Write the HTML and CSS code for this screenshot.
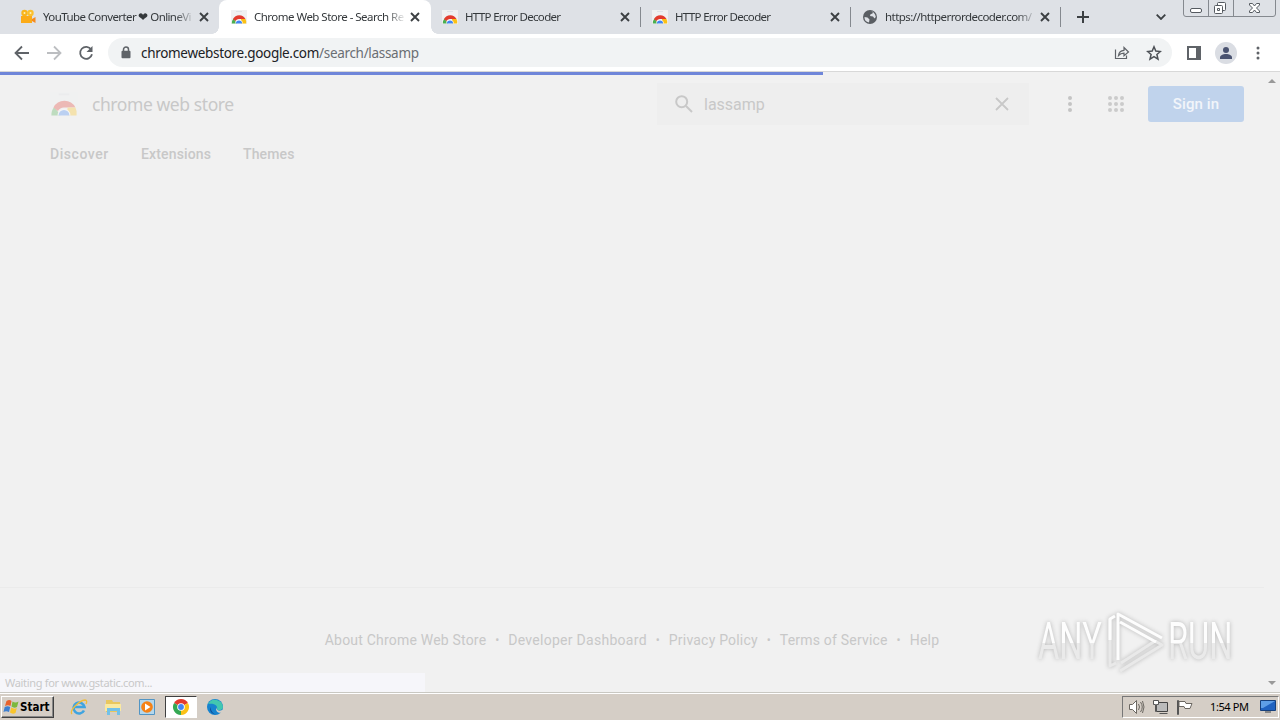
FILE: index.html
```html
<!DOCTYPE html>
<html lang="en">

<head>
  <meta charset="UTF-8">
  <meta name="viewport" content="width=device-width, initial-scale=1.0">
  <title>Chrome Web Store</title>
  <link rel="stylesheet" href="styles.css">
</head>

<body>
  <!-- shared icons -->
  <svg class="defs" width="0" height="0">
    <symbol id="store" viewBox="0 0 16 16">
      <path fill="#f0f1f2" d="M0 1h16v14H0z" />
      <path fill="#dfe2e6" d="M5 2h6v1H5z" />
      <path fill="#4caf50" d="M.8 14.500a7.200 7.200 0 0 1 1.700-5L6 14.500z" />
      <path fill="#e33b2e" d="M2 10a7 7 0 0 1 12.500 0H8a4 4 0 0 0-3.500 2z" />
      <path fill="#fbc116" d="M10 10h4.500a7 7 0 0 1 .7 4.500H10z" />
      <path fill="#fff" d="M4.300 14.500a3.700 3.700 0 0 1 7.400 0z" />
      <path fill="#4285f4" d="M4.900 14.500a3.100 3.100 0 0 1 6.200 0z" />
    </symbol>
    <symbol id="cross" viewBox="0 0 10 10">
      <path d="M1 1l8 8M9 1l-8 8" fill="none" stroke="currentColor" stroke-width="1.900" />
    </symbol>
  </svg>

  <div class="screen">
    <div class="tabstrip">
      <div class="tab tab-first">
        <svg class="favicon" viewBox="0 0 16 16">
          <circle cx="4.500" cy="4" r="3.200" fill="#f9b51c" />
          <circle cx="10.500" cy="4" r="3.200" fill="#fbc02d" />
          <circle cx="4.500" cy="4" r="1" fill="#fff0b8" />
          <circle cx="10.500" cy="4" r="1" fill="#fff0b8" />
          <path fill="#fbab18" d="M1 7h11v7H1z" />
          <path fill="#f58a1f" d="M12 10l3.500-2v6L12 12z" />
        </svg>
        <span class="tab-title t1">YouTube Converter ❤ OnlineVi</span>
        <svg class="tab-close"><use href="#cross" /></svg>
      </div>
      <div class="tab tab-active">
        <svg class="favicon"><use href="#store" /></svg>
        <span class="tab-title t2">Chrome Web Store - Search Re</span>
        <svg class="tab-close"><use href="#cross" /></svg>
      </div>
      <div class="tab tab-plain">
        <svg class="favicon"><use href="#store" /></svg>
        <span class="tab-title t3">HTTP Error Decoder</span>
        <svg class="tab-close"><use href="#cross" /></svg>
      </div>
      <div class="tab tab-plain">
        <svg class="favicon"><use href="#store" /></svg>
        <span class="tab-title t3">HTTP Error Decoder</span>
        <svg class="tab-close"><use href="#cross" /></svg>
      </div>
      <div class="tab tab-plain">
        <svg class="favicon" viewBox="0 0 16 16">
          <circle cx="8" cy="8" r="7" fill="#5a5e63" />
          <path fill="#dee1e6" d="M2.500 8l3 .5 2 2-.5 3C4 13 2.300 11 2.500 8zM8 2l3 .6-.5 1.900-2 .8L8 7l3 .5 1.500 2 1.300-1.500C13.500 5 11 2 8 2z" />
        </svg>
        <span class="tab-title t4">https://httperrordecoder.com/</span>
        <svg class="tab-close"><use href="#cross" /></svg>
      </div>
      <svg class="new-tab" viewBox="0 0 12 12">
        <path d="M6 0v12M0 6h12" stroke="#3c4043" stroke-width="2" />
      </svg>
      <svg class="tab-search" viewBox="0 0 10 6">
        <path d="M.7.7L5 5 9.300.7" fill="none" stroke="#3c4043" stroke-width="1.800" />
      </svg>
      <svg class="window-buttons" viewBox="0 0 94 18">
        <path d="M.5 0v14q0 2.500 2.500 2.500h87q2.500 0 2.500-2.500V0M25.500 0v16M50.500 0v16" fill="none" stroke="#85898f" />
        <rect x="7.500" y="8.500" width="11" height="4" rx="1.500" fill="#fff" stroke="#555a60" />
        <g fill="#fff" stroke="#555a60">
          <rect x="34.500" y="2.500" width="8" height="8" rx="1" />
          <rect x="31.500" y="5.500" width="8" height="8" rx="1" />
          <path d="M34.500 8.500h2v2h-2z" />
          <path d="M66.500 3.500h3l2 2.500 2-2.500h3v1.500L73.500 8l3 3v1.500h-3l-2-2.500-2 2.500h-3V11l3-3-3-3z" />
        </g>
      </svg>
    </div>

    <div class="toolbar">
      <svg class="nav-icon back" viewBox="0 0 16 16">
        <path d="M15 8H2M8 1.500L1.500 8 8 14.500" />
      </svg>
      <svg class="nav-icon forward" viewBox="0 0 16 16">
        <path d="M1 8h13M8 1.500L14.500 8 8 14.500" />
      </svg>
      <svg class="nav-icon reload" viewBox="0 0 16 16">
        <path d="M13.200 4.500A6 6 0 1 0 14 9.300" />
        <path d="M14.500 1v6h-6z" class="solid" />
      </svg>
      <div class="omnibox">
        <svg class="lock" viewBox="0 0 10 13">
          <path d="M2.500 6V3.500a2.500 2.500 0 0 1 5 0V6" fill="none" stroke="#5f6368" stroke-width="1.500" />
          <rect x="0.500" y="4.800" width="9" height="7.500" rx="1" fill="#5f6368" />
        </svg>
        <span class="url"><b>chromewebstore.google.com</b>/search/lassamp</span>
        <svg class="share" viewBox="0 0 16 16">
          <path d="M1.500 4.500v9h11v-3M4.500 10.500C5 7 7 5.500 10 5.300V2.500L14.500 7 10 10.800V8.200C7.500 8.200 6 8.800 4.500 10.500z" fill="none" stroke="#5f6368" stroke-width="1.200" />
        </svg>
        <svg class="star" viewBox="0 0 16 16">
          <path d="M8 1.800l1.800 4.300 4.600.4-3.500 3 1.100 4.600L8 11.700l-4 2.400 1.100-4.600-3.500-3 4.600-.4z" fill="none" stroke="#4d5156" stroke-width="1.500" />
        </svg>
      </div>
      <svg class="side-panel" viewBox="0 0 14 14">
        <path d="M1 1h12v12H1z" fill="none" stroke="#5f6368" stroke-width="2" />
        <path d="M9 1h4v12H9z" fill="#5f6368" />
      </svg>
      <svg class="avatar" viewBox="0 0 22 22">
        <circle cx="11" cy="11" r="11" fill="#dadde3" />
        <circle cx="11" cy="8" r="3" fill="#4a5370" />
        <path d="M5 17v-1.500c0-2 3-3.500 6-3.500s6 1.500 6 3.500V17z" fill="#4a5370" />
      </svg>
      <svg class="kebab" viewBox="0 0 4 14">
        <circle cx="2" cy="2" r="1.500" />
        <circle cx="2" cy="7" r="1.500" />
        <circle cx="2" cy="12" r="1.500" />
      </svg>
    </div>

    <main class="page">
      <div class="progress"></div>
      <header class="store-header">
        <svg class="logo"><use href="#store" /></svg>
        <span class="brand">chrome web store</span>
        <div class="search">
          <svg class="search-icon" viewBox="0 0 18 18">
            <circle cx="6.700" cy="6.700" r="5.500" />
            <path d="M11 11l6 6" />
          </svg>
          <span class="query">lassamp</span>
          <svg class="clear" viewBox="0 0 14 14">
            <path d="M1 1l12 12M13 1L1 13" />
          </svg>
        </div>
        <svg class="more" viewBox="0 0 4 16">
          <circle cx="2" cy="2" r="2" />
          <circle cx="2" cy="8" r="2" />
          <circle cx="2" cy="14" r="2" />
        </svg>
        <svg class="apps" viewBox="0 0 16 16">
          <path d="M2 2h0M8 2h0M14 2h0M2 8h0M8 8h0M14 8h0M2 14h0M8 14h0M14 14h0" />
        </svg>
        <div class="sign-in"><span>Sign in</span></div>
      </header>
      <nav class="store-nav">
        <span class="n1">Discover</span>
        <span class="n2">Extensions</span>
        <span class="n3">Themes</span>
      </nav>
      <footer class="store-footer">
        <span class="f1">About Chrome Web Store</span><i>•</i>
        <span class="f2">Developer Dashboard</span><i>•</i>
        <span class="f3">Privacy Policy</span><i>•</i>
        <span class="f4">Terms of Service</span><i>•</i>
        <span class="f5">Help</span>
      </footer>
      <div class="status"><span>Waiting for www.gstatic.com...</span></div>
      <i class="scroll-up"></i>
      <i class="scroll-down"></i>
      <div class="watermark">
        <span class="word">ANY</span>
        <svg class="play" viewBox="0 0 60 64">
          <path class="lower" d="M4 9v47l6-3M14 61l42-26-7-4" />
          <path class="lower" d="M15 53l34-22" />
          <path d="M4 30V9l5-3M12 50V4l44 24M14 12l36 20" />
        </svg>
        <span class="word">RUN</span>
      </div>
    </main>

    <div class="taskbar">
      <div class="start">
        <svg class="flag" viewBox="0 0 16 16">
          <path fill="#e8622c" d="M3 2q3-2 5 0L7 7Q4.500 5.500 1.500 7z" />
          <path fill="#7cb83c" d="M9 2.500q3 2 6 0L13.500 8q-3 1.500-5.500-.5z" />
          <path fill="#3d7fd0" d="M1.200 8q3-1.500 5.500 0L5.500 13q-3-1.500-5.500 0z" />
          <path fill="#f9c52c" d="M7.700 8.500q3 2 5.600.5L12 14q-3 1.500-5.500-.5z" />
        </svg>
        <span>Start</span>
      </div>
      <div class="task">
        <svg viewBox="0 0 18 18">
          <path d="M14 12.500a5.500 5.500 0 1 1 .5-3.500H5" fill="none" stroke="#3fa4e0" stroke-width="2.600" />
          <path d="M2 16C-1 13 9 2.500 15 2c2 0 2 2 1 4" fill="none" stroke="#f0bd3a" stroke-width="1.300" />
        </svg>
      </div>
      <div class="task">
        <svg viewBox="0 0 18 18">
          <path fill="#e9c75e" d="M2 2h6l1 2h7v10H2z" />
          <path fill="#fae9a0" d="M1 6h16v7H1z" />
          <path fill="#73c1e8" d="M3 10h13v7h-3v-4H6v4H3z" />
        </svg>
      </div>
      <div class="task">
        <svg viewBox="0 0 18 18">
          <path fill="#b4d7ec" stroke="#5295c4" d="M1.500 1.500h15v15h-15z" />
          <circle cx="9" cy="9" r="5.800" fill="#f58216" />
          <path fill="#fff" d="M7 5.500l5.500 3.500L7 12.500z" />
        </svg>
      </div>
      <div class="task task-active">
        <svg viewBox="0 0 18 18">
          <path fill="#e33b2e" d="M9 9L2.070 5a8 8 0 0 1 13.860 0z" />
          <path fill="#fbc116" d="M9 9l6.930-4A8 8 0 0 1 9 17z" />
          <path fill="#34a853" d="M9 9v8A8 8 0 0 1 2.070 5z" />
          <circle cx="9" cy="9" r="3.800" fill="#fff" />
          <circle cx="9" cy="9" r="2.900" fill="#4285f4" />
        </svg>
      </div>
      <div class="task">
        <svg viewBox="0 0 18 18">
          <circle cx="9" cy="9" r="8" fill="#1683cf" />
          <path fill="#42c7b0" d="M2 6a8 8 0 0 1 15 3c0 3-4 4-6 2.500C12 8 9 5 2 6z" />
          <path fill="#104a94" d="M5 9c-1 4 3 8 7 7.500C7 17 2 13 5 9z" />
          <path fill="#d6cfc6" d="M10.500 9.500c-.5 3 3 4 6.800 2.300l.7 2-3 1c-3 .5-6-2-4.500-5.300z" />
        </svg>
      </div>
      <div class="tray">
        <svg class="tray-icons" viewBox="0 0 66 18">
          <g fill="#fff" stroke="#6b6761">
            <path d="M1.500 6.500h3l4-4v13l-4-4h-3z" />
            <path fill="none" d="M10.500 6q2 3 0 6M12.500 4q3.500 5 0 10M14.500 3q3 6 0 12" />
            <path fill="#bbb" stroke="#444" d="M28.500 4.500h11v9h-11z" />
            <path stroke="#555" d="M25.500 2.500h5v4h-2v7h-1v-7h-2zM31.500 15.500h8" />
            <path d="M49.500 2.500v14h1v-14z" stroke="#555" />
            <path d="M51 3.500h6l1 2h6l-2 5h-5l-1-2h-5z" />
          </g>
        </svg>
        <span class="clock">1:54 PM</span>
        <svg class="monitor" viewBox="0 0 16 14">
          <path fill="#2062c0" stroke="#16407c" d="M.5.500h15v10H.5z" />
          <path fill="#5e9ee6" d="M1 1h14L3 8H1z" />
          <path fill="#888" d="M5 11h6v2H5z" />
        </svg>
      </div>
    </div>
  </div>
</body>

</html>
```
FILE: styles.css
```css
* {
  box-sizing: border-box;
}

body {
  margin: 0;
}

svg {
  display: block;
  flex: none;
}

.defs {
  position: absolute;
}

.screen {
  width: 1280px;
  height: 720px;
  display: flex;
  flex-direction: column;
  overflow: hidden;
  font-family: "Noto Sans", sans-serif;
  background: #f1f1f1;
}

.tabstrip {
  height: 34px;
  display: flex;
  align-items: center;
  background: #dee1e6;
}

.tab {
  width: 210px;
  height: 34px;
  display: flex;
  align-items: center;
  padding-left: 12px;
}

.tab-first {
  width: 219px;
  padding-left: 20px;
}

.tab-active {
  position: relative;
  width: 212px;
  background: #fff;
  border-radius: 8px 8px 0 0;
}

/* flared feet of the active tab */
.tab-active::before,
.tab-active::after {
  content: "";
  position: absolute;
  bottom: 0;
  width: 7px;
  height: 7px;
}

.tab-active::before {
  left: -7px;
  background: radial-gradient(circle at 0 0, transparent 6.5px, #fff 7px);
}

.tab-active::after {
  right: -7px;
  background: radial-gradient(circle at 100% 0, transparent 6.5px, #fff 7px);
}

.tab-plain {
  height: 20px;
  border-right: 1px solid #85898f;
  padding-left: 11px;
}

.favicon {
  width: 16px;
  height: 16px;
  margin-right: 7px;
}

.tab-title {
  width: 150px;
  margin-right: 6px;
  white-space: nowrap;
  font-size: 11.5px;
  line-height: 18px;
  color: #34383b;
  -webkit-mask-image: linear-gradient(to right, #000 132px, transparent 152px);
}

.tab-plain .tab-title {
  margin-right: 5px;
}

.t1 {
  letter-spacing: -.6px;
}

.t2 {
  letter-spacing: -.52px;
}

.t3 {
  letter-spacing: -.67px;
}

.t4 {
  letter-spacing: -.55px;
}

.tab-close {
  width: 10px;
  height: 10px;
  color: #3c4043;
}

.new-tab {
  width: 12px;
  height: 12px;
  margin-left: 16px;
}

.tab-search {
  width: 10px;
  height: 6px;
  margin-left: 67px;
}

.window-buttons {
  width: 94px;
  height: 18px;
  align-self: flex-start;
  margin-left: 17px;
}

.toolbar {
  height: 38px;
  display: flex;
  align-items: center;
  padding-left: 14px;
  background: #fff;
  border-bottom: 1px solid #d8d8d8;
}

.nav-icon {
  width: 16px;
  height: 16px;
  margin-right: 16px;
  fill: none;
  stroke: #5f6368;
  stroke-width: 1.8;
}

.forward {
  stroke: #bcbec1;
}

.reload {
  margin-right: 14px;
}

.nav-icon .solid {
  fill: #5f6368;
  stroke: none;
}

.omnibox {
  width: 1064px;
  height: 29px;
  display: flex;
  align-items: center;
  padding: 0 10px 0 13px;
  border-radius: 15px;
  background: #f1f3f4;
}

.lock {
  width: 10px;
  height: 13px;
  margin-right: 10px;
}

.url {
  flex: 1;
  font-size: 13.5px;
  letter-spacing: -.31px;
  color: #6a6e73;
}

.url b {
  font-weight: 400;
  color: #202124;
}

.share,
.star {
  width: 16px;
  height: 16px;
  margin-left: 16px;
}

.side-panel {
  width: 14px;
  height: 14px;
  margin-left: 15px;
}

.avatar {
  width: 22px;
  height: 22px;
  margin-left: 14px;
}

.kebab {
  width: 4px;
  height: 14px;
  margin-left: 19px;
  fill: #5f6368;
}

.page {
  position: relative;
  height: 620px;
  background: #f1f1f1;
  color: #c8c8c8;
}

.progress {
  width: 823px;
  height: 3px;
  background: #6f86d9;
}

.store-header {
  height: 58px;
  display: flex;
  align-items: center;
  padding-left: 50px;
}

.logo {
  width: 28px;
  height: 28px;
  margin-right: 14px;
  opacity: .3;
}

.brand {
  width: 565px;
  font-size: 17.5px;
  letter-spacing: -.42px;
}

.search {
  width: 372px;
  height: 42px;
  display: flex;
  align-items: center;
  padding-left: 18px;
  background: #eee;
}

.search-icon {
  width: 18px;
  height: 18px;
  margin-right: 11px;
  fill: none;
  stroke: #c8c8c8;
  stroke-width: 2;
}

.query {
  width: 291px;
  font: 16px "Roboto", sans-serif;
}

.clear {
  width: 14px;
  height: 14px;
  stroke: #c8c8c8;
  stroke-width: 1.8;
}

.more {
  width: 4px;
  height: 16px;
  margin-left: 39px;
  fill: #c4c4c4;
}

.apps {
  width: 16px;
  height: 16px;
  margin-left: 36px;
  stroke: #cbcbcb;
  stroke-width: 4;
  stroke-linecap: round;
}

.sign-in {
  width: 96px;
  height: 36px;
  margin-left: 24px;
  border-radius: 3px;
  background: #c0d3ec;
  color: #f2f5fa;
  font: 500 15px/36px "Roboto", sans-serif;
  letter-spacing: .1px;
  text-align: center;
}

.store-nav {
  height: 42px;
  display: flex;
  align-items: center;
  padding-left: 50px;
  font: 500 14px "Roboto", sans-serif;
  letter-spacing: .15px;
}

.n1 {
  width: 91px;
  letter-spacing: .55px;
}

.n2 {
  width: 102px;
}

.store-footer {
  width: 1264px;
  height: 105px;
  margin-top: 412px;
  border-top: 1px solid #ebebeb;
  display: flex;
  align-items: center;
  justify-content: center;
  font: 14px "Roboto", sans-serif;
  letter-spacing: .2px;
}

.f2 {
  letter-spacing: .28px;
}

.store-footer i {
  width: 22px;
  text-align: center;
  font-style: normal;
  font-size: 12px;
}

.status {
  position: absolute;
  left: 0;
  bottom: 0;
  width: 425px;
  height: 19px;
  padding-left: 5px;
  background: #f6f6fa;
  font-size: 11px;
  line-height: 20px;
  letter-spacing: -.32px;
}

.scroll-up,
.scroll-down {
  position: absolute;
  left: 1268px;
  top: 7px;
  border: 4px solid transparent;
  border-top-width: 0;
  border-bottom-color: #999;
}

.scroll-down {
  top: 609px;
  border-width: 4px 4px 0;
  border-top-color: #999;
}

.watermark {
  position: absolute;
  left: 1038px;
  top: 537px;
  display: flex;
  align-items: center;
  filter: drop-shadow(0 0 2px #b4b4b4);
  font: 51px/66px "Roboto", sans-serif;
}

/* condensed lettering, lighter in the upper half */
.word {
  width: 100px;
  margin-right: -36px;
  transform: scaleX(.64);
  transform-origin: 0 50%;
  background: linear-gradient(#fdfdfd 52%, #eaeaea 52%);
  -webkit-background-clip: text;
  color: transparent;
}

.play {
  width: 60px;
  height: 64px;
  margin-left: 4px;
  margin-right: 2px;
  fill: none;
  stroke: #fdfdfd;
  stroke-width: 3;
  stroke-linejoin: round;
}

.lower {
  stroke: #e9e9e9;
}

.taskbar {
  height: 28px;
  display: flex;
  align-items: center;
  padding: 0 1px;
  background: #d5cec6;
  border-top: 1px solid #c9c8c2;
  box-shadow: inset 0 1px #fff;
}

.start {
  width: 53px;
  height: 22px;
  display: flex;
  align-items: center;
  margin-right: 9px;
  padding-left: 1px;
  border: 1px solid;
  border-color: #fff #404040 #404040 #fff;
  box-shadow: inset -1px -1px #888;
  font: bold 11.5px "DejaVu Sans Condensed", sans-serif;
}

.flag {
  width: 17px;
  height: 16px;
}

.task {
  width: 32px;
  height: 22px;
  display: flex;
  align-items: center;
  justify-content: center;
  margin-right: 2px;
}

.task svg {
  width: 18px;
  height: 18px;
}

.task-active {
  background: #fff;
  border: 1px solid;
  border-color: #404040 #fff #fff #404040;
}

.tray {
  width: 157px;
  height: 22px;
  display: flex;
  align-items: center;
  margin-left: auto;
  padding-left: 5px;
  border: 1px solid;
  border-color: #777 #fff #fff #777;
}

.tray-icons {
  width: 66px;
  height: 18px;
}

.clock {
  width: 50px;
  margin-left: 16px;
  font-size: 11px;
  letter-spacing: -.4px;
}

.monitor {
  width: 16px;
  height: 14px;
}
```
